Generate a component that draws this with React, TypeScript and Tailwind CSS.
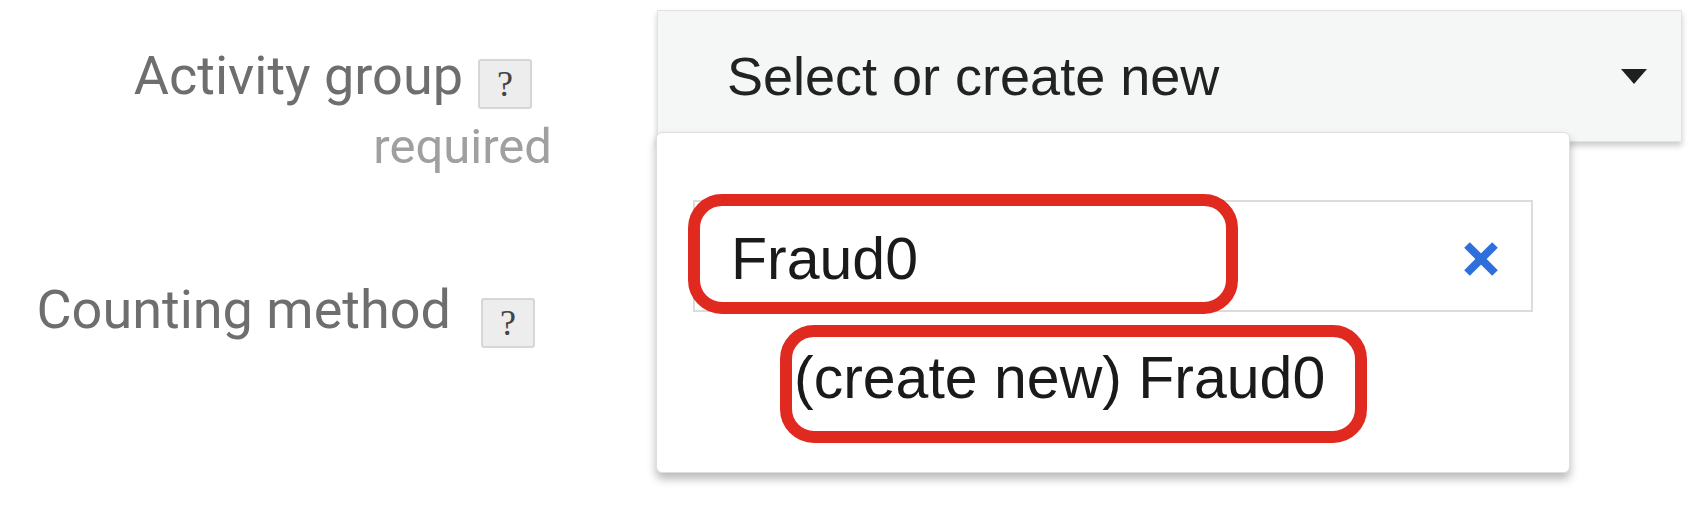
import React from 'react';

const labelFont = "font-['Roboto','Liberation_Sans',sans-serif]";
const fieldFont = "font-['Liberation_Sans','Arial',sans-serif]";

// small grey "?" help chip next to a label
function HelpChip({ className = '' }: { className?: string }) {
  return (
    <span
      className={`flex h-[50px] w-[54px] shrink-0 items-center justify-center rounded-[3px] border-2 border-[#d6d6d6] bg-[#ededed] font-['Liberation_Serif',serif] text-[36px] leading-none text-[#444444] ${className}`}
    >
      ?
    </span>
  );
}

function ClearIcon() {
  return (
    <svg width="38" height="36" viewBox="0 0 38 36" fill="none">
      <line x1="5" y1="4" x2="33" y2="32" stroke="#2f6fdc" strokeWidth="8" />
      <line x1="33" y1="4" x2="5" y2="32" stroke="#2f6fdc" strokeWidth="8" />
    </svg>
  );
}

function Caret() {
  return (
    <svg width="26" height="15" viewBox="0 0 26 15">
      <polygon points="0,0 26,0 13,15" fill="#1f1f1f" />
    </svg>
  );
}

export default function App() {
  return (
    <div className="relative h-[508px] w-[1698px] overflow-hidden bg-white">
      <div className="flex pt-[10px]">
        {/* label column */}
        <div className={`flex w-[552px] shrink-0 flex-col items-end ${labelFont}`}>
          <div className="mt-[34px] flex items-start">
            <span className="text-[54px] leading-[64px] text-[#6e6e6e]">Activity group</span>
            <HelpChip className="ml-[15px] mr-[20px] mt-[15px]" />
          </div>
          <span className="mt-[10px] text-[49px] leading-[56px] text-[#a0a0a0]">required</span>
          <div className="mt-[103px] flex items-start">
            <span className="text-[54px] leading-[64px] text-[#6e6e6e]">Counting method</span>
            <HelpChip className="ml-[30px] mr-[17px] mt-[20px]" />
          </div>
        </div>

        {/* field column */}
        <div className={`relative ml-[105px] w-[1025px] ${fieldFont}`}>
          <div className="flex h-[132px] items-center justify-between border border-[#e2e2e2] bg-[#f5f6f6] pl-[69px] pr-[34px] shadow-[0_4px_6px_rgba(0,0,0,0.2)]">
            <span className="text-[54px] leading-none text-[#222222]">Select or create new</span>
            <Caret />
          </div>

          {/* open dropdown */}
          <div className="absolute left-[-1px] top-[122px] z-10 w-[914px] rounded-[6px] border border-[#dedede] bg-white px-[36px] pb-[59px] pt-[67px] shadow-[0_6px_10px_rgba(0,0,0,0.28)]">
            <div className="flex h-[112px] items-center justify-between border-2 border-[#dcdcdc] pl-[36px] pr-[31px] pt-[6px]">
              <span className="text-[59px] leading-none text-[#1a1a1a]">Fraud0</span>
              <ClearIcon />
            </div>
            <div className="mt-[31px] pl-[101px] text-[59px] leading-[70px] text-[#1a1a1a]">(create new) Fraud0</div>
          </div>
        </div>
      </div>

      {/* red annotation outlines drawn over the screenshot */}
      <div className="pointer-events-none absolute left-[688px] top-[194px] z-20 h-[120px] w-[550px] rounded-[34px] border-[12px] border-[#e02a20]" />
      <div className="pointer-events-none absolute left-[780px] top-[325px] z-20 h-[118px] w-[587px] rounded-[34px] border-[12px] border-[#e02a20]" />
    </div>
  );
}
